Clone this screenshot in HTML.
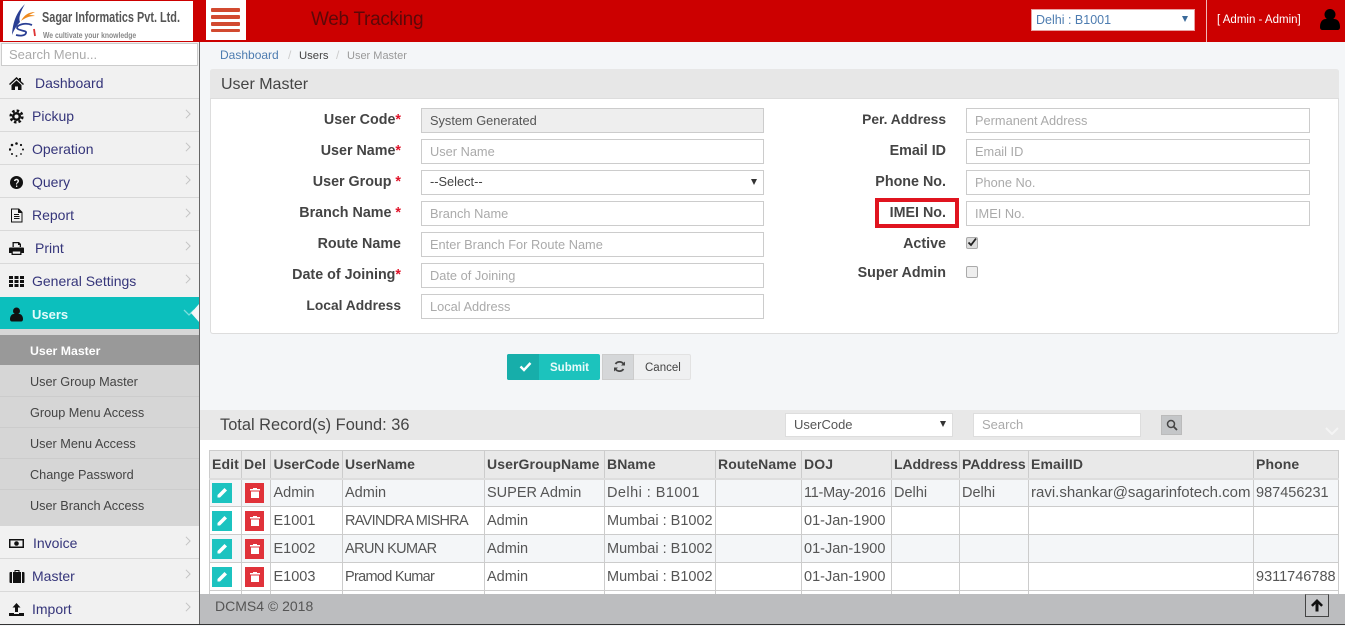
<!DOCTYPE html>
<html><head><meta charset="utf-8"><title>User Master</title>
<style>
html,body{margin:0;padding:0;width:1345px;height:625px;overflow:hidden;background:#f4f6f8;font-family:"Liberation Sans",sans-serif;color:#444;font-size:14px}
.a{position:absolute;white-space:nowrap;box-sizing:border-box}
.ni{position:absolute;left:0;width:199px;height:33px;background:#f1f1f1;border-bottom:1px solid #d9d9d9;box-sizing:border-box}
.ni span{position:absolute;top:1px;line-height:33px;color:#35357a;font-size:14px;white-space:nowrap}
.ni svg.i{position:absolute;left:9px;top:10px;width:15px;height:15px;fill:#111}
.ni svg.c{position:absolute;left:185px;top:10px;width:6px;height:10px;fill:none;stroke:#c4c4c4;stroke-width:1.2}
.si{position:absolute;left:30px;font-size:12.7px;color:#444;white-space:nowrap;line-height:16px}
.lb{position:absolute;width:200px;text-align:right;font-weight:bold;font-size:14.3px;color:#444;line-height:20px;white-space:nowrap}
.lb b{color:#e0142a}
.in{position:absolute;width:343px;height:25px;background:#fff;border:1px solid #ccc;box-sizing:border-box;font-size:12.8px;line-height:23px;padding-left:8px;color:#aaa;white-space:nowrap}
table{border-collapse:collapse;table-layout:fixed;position:absolute;left:209px;top:450px;width:1130px;font-size:14.5px;color:#555}
td,th{border:1px solid #ccc;padding:0 0 0 2px;height:28px;text-align:left;white-space:nowrap;overflow:hidden;box-sizing:border-box}
th{background:#e9e9e9;color:#444;font-size:14px;border-bottom:2px solid #ddd;height:28px;letter-spacing:.1px}
td:nth-child(3),th:nth-child(3){padding-left:2.500px}
th:nth-child(3){letter-spacing:0}
tr.o td{background:#f4f6f8}
.e,.d{display:block;height:20px;margin-top:1px;position:relative}
.e{width:20px;background:#1cc3c0;margin-left:0}
.d{width:19px;background:#e0323a;margin-left:1px}
.e svg,.d svg{position:absolute;left:4px;top:4px;width:12px;height:12px;fill:#fff}
</style></head><body>

<!-- header -->
<div class="a" style="left:0;top:0;width:1345px;height:42px;background:#cc0000"></div>
<div class="a" style="left:3px;top:1px;width:190px;height:40px;background:#fff"></div>
<svg class="a" style="left:11px;top:3px;width:32px;height:36px" viewBox="0 0 32 36">
<path d="M14 1C9 6 2 14 1 32 3 27 6 22 9 19 7 14 11 6 14 1z" fill="#2a3f94"/>
<path d="M24 9C18 9 13 12 10 18c4-3 8-5 14-5-2-1-4-1-6-1 2-1 4-2 6-3z" fill="#ee8a1e"/>
<path d="M21 22C14 19 6 22 6 25c1 3 10 2 9 5-1 3-6 3-10 2" fill="none" stroke="#2a3f94" stroke-width="1.800"/>
<path d="M23 26l1 7" stroke="#d33" stroke-width="1.800"/>
</svg>
<div class="a" style="left:42px;top:9px;font-size:15px;font-weight:bold;color:#555;line-height:18px;transform:scaleX(.726);transform-origin:left top">Sagar Informatics Pvt. Ltd.</div>
<div class="a" style="left:43px;top:29px;font-size:8.5px;font-weight:bold;color:#888;line-height:12px;transform:scaleX(.8);transform-origin:left top">We cultivate your knowledge</div>
<div class="a" style="left:206px;top:0;width:40px;height:40px;background:#fff"></div>
<div class="a" style="left:211px;top:8px;width:29px;height:3.5px;background:#d24a30;border-radius:1px"></div>
<div class="a" style="left:211px;top:15px;width:29px;height:3.5px;background:#d24a30;border-radius:1px"></div>
<div class="a" style="left:211px;top:22px;width:29px;height:3.5px;background:#d24a30;border-radius:1px"></div>
<div class="a" style="left:211px;top:28.500px;width:29px;height:3.5px;background:#d24a30;border-radius:1px"></div>
<div class="a" style="left:311px;top:8px;font-size:19px;letter-spacing:-.3px;line-height:24px;color:#5c0808">Web Tracking</div>
<div class="a" style="left:1031px;top:9px;width:164px;height:22px;background:#fff;border:1px solid #e9a0a0;font-size:12.5px;line-height:20px;padding-left:4px;color:#4d7cb0">Delhi : B1001</div>
<div class="a" style="left:1182px;top:16px;width:0;height:0;border-left:3.5px solid transparent;border-right:3.5px solid transparent;border-top:6px solid #3a6a9a"></div>
<div class="a" style="left:1206px;top:0;width:1px;height:42px;background:#f0b8b8"></div>
<div class="a" style="left:1217px;top:13px;font-size:11.5px;line-height:15px;color:#fff">[ Admin - Admin]</div>
<svg class="a" style="left:1320px;top:8px;width:20px;height:23px" viewBox="0 0 20 23"><circle cx="10" cy="6.5" r="5.5" fill="#000"/><path d="M0 19c0-6 3-8 6-8h8c3 0 6 2 6 8 0 3-2 3-3 3H3c-1 0-3 0-3-3z" fill="#000"/></svg>

<!-- sidebar -->
<div class="a" style="left:0;top:42px;width:199px;height:583px;background:#f1f1f1"></div>
<div class="a" style="left:199px;top:42px;width:1px;height:583px;background:#666"></div>
<div class="a" style="left:1px;top:43px;width:197px;height:23px;background:#fff;border:1px solid #ccc;font-size:13px;line-height:21px;padding-left:7px;color:#aaa">Search Menu...</div>

<div class="ni" style="top:66px"><svg class="i" viewBox="0 0 15 15"><path d="M7.500 1L0 8l1 1 6.500-6 6.500 6 1-1-3-2.800V2h-2v1.300zM2.500 9v5h3.500v-3.500h3V14h3.500V9L7.500 4.500z"/></svg><span style="left:35px">Dashboard</span></div>
<div class="ni" style="top:99px"><svg class="i" viewBox="0 0 15 15"><circle cx="7.500" cy="7.500" r="4.500"/><circle cx="7.500" cy="7.500" r="5.800" fill="none" stroke="#111" stroke-width="2.600" stroke-dasharray="2.500 2.050"/><circle cx="7.500" cy="7.500" r="2" fill="#f1f1f1"/></svg><span style="left:32px">Pickup</span><svg class="c" viewBox="0 0 7 12"><path d="M1 1l5 5-5 5"/></svg></div>
<div class="ni" style="top:132px"><svg class="i" viewBox="0 0 15 15"><circle cx="7.500" cy="1.500" r="1.300"/><circle cx="12" cy="3" r="1.100"/><circle cx="14" cy="7.500" r="1"/><circle cx="12" cy="12" r=".9"/><circle cx="7.500" cy="14" r=".9"/><circle cx="3" cy="12" r="1"/><circle cx="1" cy="7.500" r="1.200"/><circle cx="3" cy="3" r="1.300"/></svg><span style="left:32px">Operation</span><svg class="c" viewBox="0 0 7 12"><path d="M1 1l5 5-5 5"/></svg></div>
<div class="ni" style="top:165px"><svg class="i" viewBox="0 0 15 15"><circle cx="7.500" cy="7.500" r="6.500"/><path d="M5 6c0-3 5-3 5 0 0 2-2 1.800-2 3.500H7C7 7.500 8.500 7.500 8.500 6c0-1-2-1-2 0z" fill="#f1f1f1"/><rect x="7" y="10.500" width="1.300" height="1.500" fill="#f1f1f1"/></svg><span style="left:32px">Query</span><svg class="c" viewBox="0 0 7 12"><path d="M1 1l5 5-5 5"/></svg></div>
<div class="ni" style="top:198px"><svg class="i" viewBox="0 0 15 15"><path d="M2 .5h8l3.500 3.500v10.500H2zM3 1.500v12h9.500V5H9V1.500zM5 6h5v1H5zM5 8h5.500v1H5zM5 10h5.500v1H5z" fill-rule="evenodd"/></svg><span style="left:32px">Report</span><svg class="c" viewBox="0 0 7 12"><path d="M1 1l5 5-5 5"/></svg></div>
<div class="ni" style="top:231px"><svg class="i" viewBox="0 0 15 15"><path d="M3.500 1h6.500l2 2v3h-1.300V4H9V2.300H4.800V6H3.500zM1 6.500h13c.6 0 1 .4 1 1V12h-2.500v2h-10v-2H0V7.500c0-.6.400-1 1-1zM3.800 10.500v2.200h7.400v-2.200z" fill-rule="evenodd"/></svg><span style="left:35px">Print</span><svg class="c" viewBox="0 0 7 12"><path d="M1 1l5 5-5 5"/></svg></div>
<div class="ni" style="top:264px;border-bottom:0"><svg class="i" viewBox="0 0 15 15"><path d="M0 2h4v3H0zM5.500 2h4v3h-4zM11 2h4v3h-4zM0 6h4v3H0zM5.500 6h4v3h-4zM11 6h4v3h-4zM0 10h4v3H0zM5.500 10h4v3h-4zM11 10h4v3h-4z"/></svg><span style="left:32px">General Settings</span><svg class="c" viewBox="0 0 7 12"><path d="M1 1l5 5-5 5"/></svg></div>

<div class="a" style="left:0;top:297px;width:199px;height:32px;background:#0cbfbd"></div>
<svg class="a" style="left:10px;top:307px;width:13px;height:15px" viewBox="0 0 13 15"><circle cx="6.500" cy="4" r="3.500" fill="#111"/><path d="M0 12c0-3 2-5 3.500-5h6c1.500 0 3.500 2 3.500 5 0 2-1 2.500-2 2.500H2c-1 0-2-.5-2-2.500z" fill="#111"/></svg>
<div class="a" style="left:32px;top:298px;line-height:33px;font-size:13px;font-weight:bold;color:#e4fbfb">Users</div>
<svg class="a" style="left:183px;top:309px;width:12px;height:7px" viewBox="0 0 12 7"><path d="M1 1l5 5 5-5" fill="none" stroke="#7fdedd" stroke-width="1.300"/></svg>
<div class="a" style="left:191px;top:304px;width:0;height:0;border-top:9px solid transparent;border-bottom:9px solid transparent;border-right:8px solid #f4f6f8"></div>

<div class="a" style="left:0;top:329px;width:199px;height:197px;background:#d6d6d6"></div>
<div class="a" style="left:0;top:335px;width:199px;height:30px;background:#999"></div>
<div class="si" style="top:343px;font-weight:bold;color:#fff;font-size:12.3px">User Master</div>
<div class="si" style="top:374px">User Group Master</div>
<div class="si" style="top:405px">Group Menu Access</div>
<div class="si" style="top:436px">User Menu Access</div>
<div class="si" style="top:467px">Change Password</div>
<div class="si" style="top:498px">User Branch Access</div>
<div class="a" style="left:0;top:396px;width:199px;height:1px;background:#ccc"></div>
<div class="a" style="left:0;top:427px;width:199px;height:1px;background:#ccc"></div>
<div class="a" style="left:0;top:458px;width:199px;height:1px;background:#ccc"></div>
<div class="a" style="left:0;top:489px;width:199px;height:1px;background:#ccc"></div>

<div class="ni" style="top:526px"><svg class="i" viewBox="0 0 15 15" style="width:17px;left:8px"><path d="M0 3h15v9H0zM1.500 4.500v6h12v-6z" fill-rule="evenodd"/><circle cx="7.500" cy="7.500" r="2.300"/></svg><span style="left:33px">Invoice</span><svg class="c" viewBox="0 0 7 12"><path d="M1 1l5 5-5 5"/></svg></div>
<div class="ni" style="top:559px"><svg class="i" viewBox="0 0 15 15" style="width:16px"><path d="M5 1h5v2h4c.6 0 1 .4 1 1v9c0 .6-.4 1-1 1H1c-.6 0-1-.4-1-1V4c0-.6.400-1 1-1h4zM6 2v1h3V2zM2.500 3v11h1V3zM11.500 3v11h1V3z" fill-rule="evenodd"/></svg><span style="left:32px">Master</span><svg class="c" viewBox="0 0 7 12"><path d="M1 1l5 5-5 5"/></svg></div>
<div class="ni" style="top:592px"><svg class="i" viewBox="0 0 15 15"><path d="M7.500 1l4 4.500H9V10H6V5.500H3.500zM0 11h5v1h5v-1h5v3H0z"/></svg><span style="left:32px">Import</span><svg class="c" viewBox="0 0 7 12"><path d="M1 1l5 5-5 5"/></svg></div>

<!-- breadcrumb -->
<div class="a" style="left:220px;top:47px;font-size:12px;line-height:16px;color:#4d7cb0">Dashboard</div>
<div class="a" style="left:288px;top:47px;font-size:12px;line-height:16px;color:#ccc">/</div>
<div class="a" style="left:299px;top:48px;font-size:11.3px;line-height:16px;color:#444">Users</div>
<div class="a" style="left:336px;top:47px;font-size:12px;line-height:16px;color:#ccc">/</div>
<div class="a" style="left:347px;top:48px;font-size:11px;line-height:16px;color:#999">User Master</div>

<!-- panel -->
<div class="a" style="left:210px;top:69px;width:1129px;height:265px;background:#fff;border:1px solid #ddd;border-top:0;border-radius:3px"></div>
<div class="a" style="left:210px;top:69px;width:1129px;height:30px;background:#e7e7e7;border-radius:3px 3px 0 0;border-bottom:1px solid #ddd"></div>
<div class="a" style="left:221px;top:74px;font-size:16px;line-height:22px;color:#444">User Master</div>

<div class="lb" style="left:201px;top:110px">User Code<b>*</b></div>
<div class="lb" style="left:201px;top:141px">User Name<b>*</b></div>
<div class="lb" style="left:201px;top:172px">User Group <b>*</b></div>
<div class="lb" style="left:201px;top:203px">Branch Name <b>*</b></div>
<div class="lb" style="left:201px;top:234px">Route Name</div>
<div class="lb" style="left:201px;top:265px">Date of Joining<b>*</b></div>
<div class="lb" style="left:201px;top:296px;font-size:13.8px">Local Address</div>

<div class="in" style="left:421px;top:108px;background:#eee;color:#555">System Generated</div>
<div class="in" style="left:421px;top:139px">User Name</div>
<div class="in" style="left:421px;top:170px;color:#444;line-height:21px">--Select--</div>
<div class="a" style="left:751px;top:179px;width:0;height:0;border-left:3.500px solid transparent;border-right:3.500px solid transparent;border-top:6px solid #333"></div>
<div class="in" style="left:421px;top:201px">Branch Name</div>
<div class="in" style="left:421px;top:232px">Enter Branch For Route Name</div>
<div class="in" style="left:421px;top:263px">Date of Joining</div>
<div class="in" style="left:421px;top:294px">Local Address</div>

<div class="lb" style="left:746px;top:110px;font-size:13.8px">Per. Address</div>
<div class="lb" style="left:746px;top:141px">Email ID</div>
<div class="lb" style="left:746px;top:172px">Phone No.</div>
<div class="lb" style="left:746px;top:203px">IMEI No.</div>
<div class="lb" style="left:746px;top:234px">Active</div>
<div class="lb" style="left:746px;top:263px">Super Admin</div>
<div class="a" style="left:875px;top:198px;width:84px;height:30px;border:4px solid #e0141f"></div>

<div class="in" style="left:966px;top:108px;width:344px">Permanent Address</div>
<div class="in" style="left:966px;top:139px;width:344px">Email ID</div>
<div class="in" style="left:966px;top:170px;width:344px">Phone No.</div>
<div class="in" style="left:966px;top:201px;width:344px">IMEI No.</div>
<div class="a" style="left:966px;top:237px;width:12px;height:12px;background:#ddd;border:1px solid #aaa;border-radius:2px"></div>
<svg class="a" style="left:966px;top:236px;width:12px;height:12px" viewBox="0 0 12 12"><path d="M2.500 6.500l2.500 2.500 5-6.500" fill="none" stroke="#222" stroke-width="1.800"/></svg>
<div class="a" style="left:966px;top:266px;width:12px;height:12px;background:#eee;border:1px solid #aaa;border-radius:2px"></div>

<!-- buttons -->
<div class="a" style="left:507px;top:354px;width:93px;height:26px;background:#1cc3bd;border-radius:2px"></div>
<div class="a" style="left:507px;top:354px;width:32px;height:26px;background:#17aeaa;border-radius:2px 0 0 2px"></div>
<svg class="a" style="left:519px;top:361px;width:13px;height:11px" viewBox="0 0 13 11"><path d="M1.500 5.500l3.500 3.500 6.500-7" fill="none" stroke="#fff" stroke-width="2.400"/></svg>
<div class="a" style="left:550px;top:360px;font-size:11.5px;font-weight:bold;line-height:16px;color:#e8fbfa">Submit</div>
<div class="a" style="left:602px;top:354px;width:89px;height:26px;background:#eff0f1;border:1px solid #e2e2e2;border-radius:2px"></div>
<div class="a" style="left:602px;top:354px;width:32px;height:26px;background:#d5d7d9;border:1px solid #ccc"></div>
<svg class="a" style="left:613px;top:360px;width:13px;height:13px" viewBox="0 0 13 13"><path d="M11 5A4.800 4.800 0 0 0 2.500 4M2 8a4.800 4.800 0 0 0 8.500 1" fill="none" stroke="#444" stroke-width="1.800"/><path d="M12 1.500v4H8zM1 11.500v-4h4z" fill="#444"/></svg>
<div class="a" style="left:645px;top:360px;font-size:11.5px;line-height:16px;color:#444">Cancel</div>

<!-- list -->
<div class="a" style="left:200px;top:410px;width:1145px;height:30px;background:#e8e8e8"></div>
<div class="a" style="left:200px;top:440px;width:1145px;height:154px;background:#fff"></div>
<div class="a" style="left:220px;top:415px;font-size:16.4px;line-height:21px;color:#444">Total Record(s) Found: 36</div>
<div class="a" style="left:785px;top:413px;width:168px;height:24px;background:#fff;border:1px solid #ddd;font-size:13px;line-height:22px;padding-left:8px;color:#555">UserCode</div>
<div class="a" style="left:940px;top:421px;width:0;height:0;border-left:3.500px solid transparent;border-right:3.500px solid transparent;border-top:6px solid #333"></div>
<div class="a" style="left:973px;top:413px;width:168px;height:24px;background:#fff;border:1px solid #ddd;font-size:13px;line-height:22px;padding-left:8px;color:#aaa">Search</div>
<div class="a" style="left:1161px;top:415px;width:21px;height:20px;background:#c4c6c8;border:1px solid #bbb"></div>
<svg class="a" style="left:1166px;top:419px;width:12px;height:12px" viewBox="0 0 12 12"><circle cx="5" cy="5" r="3.500" fill="none" stroke="#444" stroke-width="1.500"/><path d="M7.500 7.500l3.500 3.500" stroke="#444" stroke-width="1.800"/></svg>
<svg class="a" style="left:1325px;top:427px;width:14px;height:8px" viewBox="0 0 14 8"><path d="M1 1l6 6 6-6" fill="none" stroke="#f4f4f4" stroke-width="2"/></svg>

<table>
<colgroup><col style="width:32px"><col style="width:29px"><col style="width:72px"><col style="width:142px"><col style="width:120px"><col style="width:111px"><col style="width:86px"><col style="width:90px"><col style="width:68px"><col style="width:69px"><col style="width:225px"><col style="width:85px"></colgroup>
<tr><th>Edit</th><th>Del</th><th>UserCode</th><th>UserName</th><th>UserGroupName</th><th>BName</th><th>RouteName</th><th>DOJ</th><th style="letter-spacing:-.1px">LAddress</th><th style="letter-spacing:-.1px">PAddress</th><th>EmailID</th><th>Phone</th></tr>
<tr class="o"><td><span class="e"><svg viewBox="0 0 12 12"><path d="M8.500 1l2.500 2.500-7 7H1.500V8z"/></svg></span></td><td><span class="d"><svg viewBox="0 0 12 12"><path d="M4 1h4v1h3v1.500H1V2h3zM2 4.500h8V11H2z"/></svg></span></td><td>Admin</td><td>Admin</td><td>SUPER Admin</td><td style="letter-spacing:.45px">Delhi : B1001</td><td></td><td style="letter-spacing:-.25px">11-May-2016</td><td>Delhi</td><td>Delhi</td><td style="font-size:15px">ravi.shankar@sagarinfotech.com</td><td>987456231</td></tr>
<tr><td><span class="e"><svg viewBox="0 0 12 12"><path d="M8.500 1l2.500 2.500-7 7H1.500V8z"/></svg></span></td><td><span class="d"><svg viewBox="0 0 12 12"><path d="M4 1h4v1h3v1.500H1V2h3zM2 4.500h8V11H2z"/></svg></span></td><td>E1001</td><td style="letter-spacing:-.7px">RAVINDRA MISHRA</td><td>Admin</td><td>Mumbai : B1002</td><td></td><td>01-Jan-1900</td><td></td><td></td><td></td><td></td></tr>
<tr class="o"><td><span class="e"><svg viewBox="0 0 12 12"><path d="M8.500 1l2.500 2.500-7 7H1.500V8z"/></svg></span></td><td><span class="d"><svg viewBox="0 0 12 12"><path d="M4 1h4v1h3v1.500H1V2h3zM2 4.500h8V11H2z"/></svg></span></td><td>E1002</td><td style="letter-spacing:-.6px">ARUN KUMAR</td><td>Admin</td><td>Mumbai : B1002</td><td></td><td>01-Jan-1900</td><td></td><td></td><td></td><td></td></tr>
<tr><td><span class="e"><svg viewBox="0 0 12 12"><path d="M8.500 1l2.500 2.500-7 7H1.500V8z"/></svg></span></td><td><span class="d"><svg viewBox="0 0 12 12"><path d="M4 1h4v1h3v1.500H1V2h3zM2 4.500h8V11H2z"/></svg></span></td><td>E1003</td><td style="letter-spacing:-.7px">Pramod Kumar</td><td>Admin</td><td>Mumbai : B1002</td><td></td><td>01-Jan-1900</td><td></td><td></td><td></td><td>9311746788</td></tr>
<tr><td></td><td></td><td></td><td></td><td></td><td></td><td></td><td></td><td></td><td></td><td></td><td></td></tr>
</table>

<!-- footer -->
<div class="a" style="left:200px;top:594px;width:1145px;height:30px;background:#bcbdbf"></div>
<div class="a" style="left:215px;top:597px;font-size:14px;line-height:18px;color:#555">DCMS4 © 2018</div>
<div class="a" style="left:1305px;top:594px;width:24px;height:23px;border:1px solid #444;border-top:1px solid #888;background:#c4c5c7"></div>
<svg class="a" style="left:1310px;top:598px;width:14px;height:14px" viewBox="0 0 14 14"><path d="M7 1l6 6-1.800 1.800L8.500 6v7.500h-3V6L2.800 8.800 1 7z" fill="#111"/></svg>
<div class="a" style="left:0;top:624px;width:1345px;height:1px;background:#333"></div>
</body></html>
